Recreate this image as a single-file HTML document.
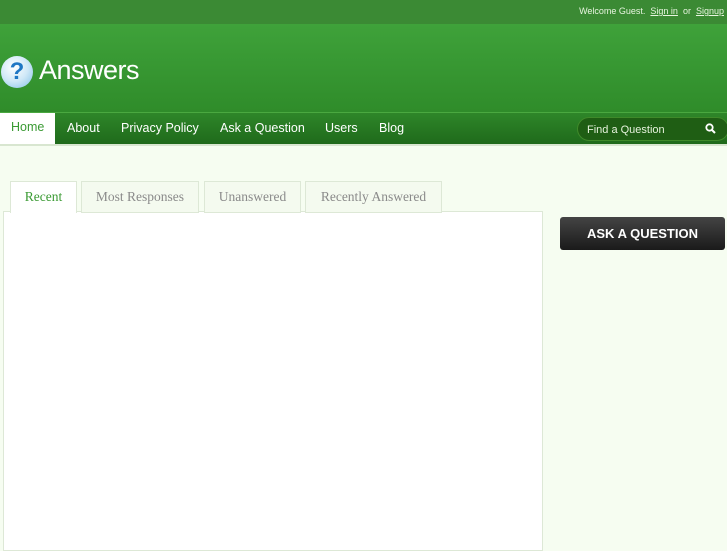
<!DOCTYPE html>
<html><head><style>
*{margin:0;padding:0;box-sizing:border-box}
body{width:727px;height:545px;overflow:hidden;background:#f6fdf1;font-family:"Liberation Sans",sans-serif;position:relative}
.top{position:absolute;left:0;top:0;width:727px;height:24px;background:#3b8a34;color:#e8f5e0;font-size:9px;text-align:right;padding:6px 3px 0 0}
.top u{color:#e8f5e0}
.hdr{position:absolute;left:0;top:24px;width:727px;height:88px;background:linear-gradient(#3fa23a,#2f8c2a)}
.logo{position:absolute;left:1px;top:56px;width:32px;height:32px;border-radius:50%;background:radial-gradient(circle at 40% 35%,#fff,#cfe8f7 50%,#7fbfe6);color:#1f77c4;font-weight:bold;font-size:24px;text-align:center;line-height:32px}
.title{position:absolute;left:39px;top:55px;color:#fff;font-size:27px;letter-spacing:-0.5px}
.nav{position:absolute;left:0;top:112px;width:727px;height:32px;background:linear-gradient(#2e8629,#1f6a1b);border-top:1px solid #4aa840}
.nav span{position:absolute;top:8px;color:#fff;font-size:12.5px}
.home{position:absolute;left:0;top:113px;width:55px;height:31px;background:#fff;color:#3a9a33;font-size:12.5px;padding:7px 0 0 11px}
.srch{position:absolute;left:577px;top:117px;width:152px;height:24px;border-radius:12px;background:#1f5e14;border:1px solid #3f8a2a;color:#e6f2dc;font-size:11px;padding:6px 0 0 9px}
.line{position:absolute;left:0;top:144px;width:727px;height:2px;background:#d8e6d0}
.tab{position:absolute;top:181px;height:32px;border:1px solid #dde8d6;background:#f4faef;color:#8a8a8a;font-family:"Liberation Serif",serif;font-size:13.5px;text-align:center;padding-top:7px}
.panel{position:absolute;left:3px;top:211px;width:540px;height:340px;background:#fff;border:1px solid #dde8d6}
.btn{position:absolute;left:560px;top:217px;width:165px;height:33px;border-radius:3px;background:linear-gradient(#444,#1a1a1a);color:#fff;font-weight:bold;font-size:13px;text-align:center;line-height:33px}
</style></head><body>
<div class="top">Welcome Guest. &nbsp;<u>Sign in</u> &nbsp;or &nbsp;<u>Signup</u></div>
<div class="hdr"></div>
<div class="logo">?</div>
<div class="title">Answers</div>
<div class="nav"><span style="left:67px">About</span><span style="left:121px">Privacy Policy</span><span style="left:220px">Ask a Question</span><span style="left:325px">Users</span><span style="left:379px">Blog</span></div>
<div class="home">Home</div>
<div class="srch">Find a Question<svg style="position:absolute;right:12px;top:5px" width="11" height="11" viewBox="0 0 11 11"><circle cx="4.5" cy="4.5" r="3.2" fill="none" stroke="#fff" stroke-width="1.8"/><path d="M7 7l3 3" stroke="#fff" stroke-width="2"/></svg></div>
<div class="line"></div>
<div class="panel"></div>
<div class="tab" style="left:10px;width:67px;height:32px;background:#fff;color:#3a9a33;border-bottom:none;z-index:2">Recent</div>
<div class="tab" style="left:81px;width:118px">Most Responses</div>
<div class="tab" style="left:204px;width:97px">Unanswered</div>
<div class="tab" style="left:305px;width:137px">Recently Answered</div>
<div class="btn">ASK A QUESTION</div>
</body></html>
